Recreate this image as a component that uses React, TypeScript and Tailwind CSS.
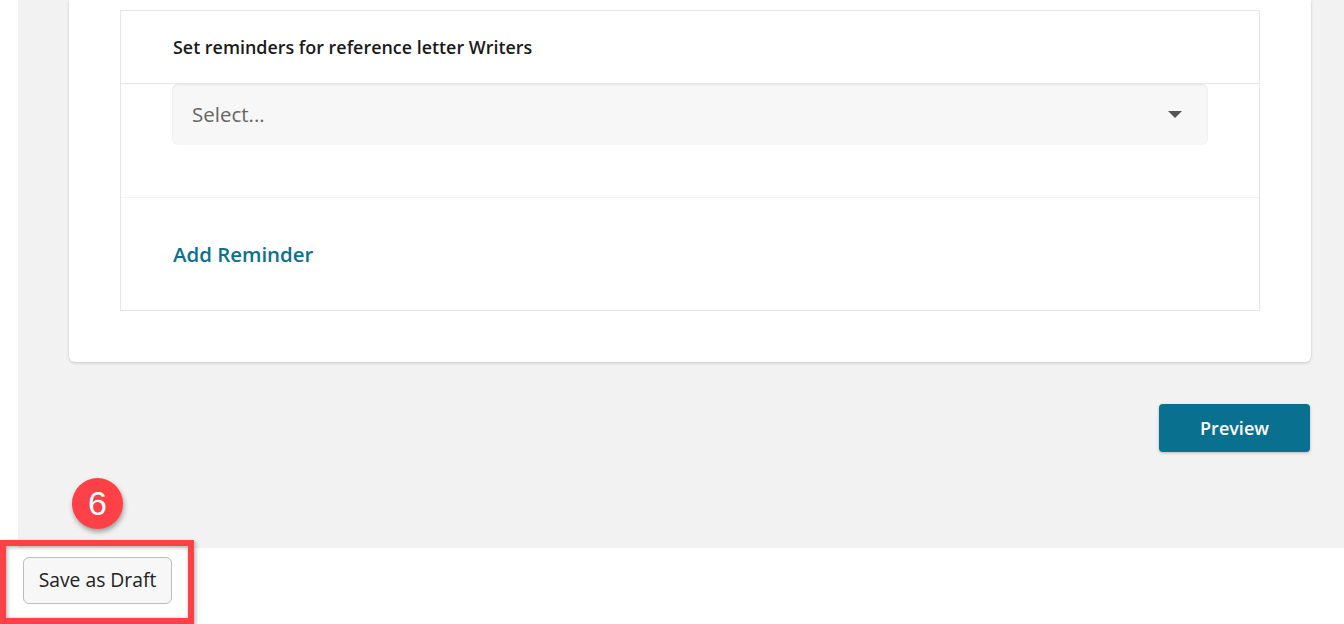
import React from 'react';

const font = { fontFamily: '"Open Sans", "Noto Sans", sans-serif' };

export default function App() {
  return (
    <div className="relative h-[624px] w-[1344px] overflow-hidden bg-white" style={font}>
      {/* Main content area */}
      <div className="flex h-[548px]">
        <div className="w-[18px] bg-white" />
        <div className="flex-1 bg-[#f2f2f2] pl-[51px] pr-[33px]">
          {/* Card */}
          <div className="rounded-b-md bg-white px-[51px] pt-[10px] pb-[51px] shadow-[0_1px_3px_rgba(0,0,0,0.18)]">
            <div className="border border-[#e6e6e6]">
              <div className="flex h-[73px] items-center border-b border-[#e6e6e6] px-[52px]">
                <span className="text-[17.9px] font-semibold text-[#1a1a1a]">
                  Set reminders for reference letter Writers
                </span>
              </div>
              <div className="px-[51px] pb-[52px]">
                <div className="flex h-[61px] items-center justify-between rounded-md bg-[#f7f7f7] pl-[20px] pr-[26px] shadow-[inset_0_1px_2px_rgba(0,0,0,0.08)]">
                  <span className="text-[20.5px] text-[#666666]">Select...</span>
                  <svg width="14" height="8" viewBox="0 0 14 8">
                    <path d="M0 0 L14 0 L7 7 Z" fill="#555555" />
                  </svg>
                </div>
              </div>
              <div className="flex h-[113px] items-center border-t border-[#f3f3f3] px-[52px]">
                <span className="text-[20.4px] font-semibold text-[#0b7190]">Add Reminder</span>
              </div>
            </div>
          </div>
          <div className="mt-[42px] flex justify-end pr-px">
            <button className="h-[48px] w-[151px] rounded bg-[#0a7090] text-[18px] font-semibold text-white shadow-[0_1px_3px_rgba(0,0,0,0.25)]">
              Preview
            </button>
          </div>
        </div>
      </div>

      {/* Footer */}
      <div className="h-[76px] bg-white pl-[23px] pt-[9px]">
        <button className="h-[47px] w-[149px] rounded-md border border-[#bdbdbd] bg-[#f7f7f7] text-[19.3px] text-[#222222]">
          Save as Draft
        </button>
      </div>

      {/* Annotation overlay */}
      <div className="pointer-events-none absolute left-0 top-[540px] h-[84px] w-[194px] border-[6px] border-[#fd4147] shadow-[inset_1px_1px_4px_rgba(0,0,0,0.35),2px_2px_4px_rgba(0,0,0,0.25)]" />
      <div
        className="pointer-events-none absolute left-[72px] top-[478px] flex h-[51px] w-[51px] items-center justify-center rounded-full bg-[#fd4147] text-[34px] text-white shadow-[1px_3px_5px_rgba(0,0,0,0.35)]"
        style={{ fontFamily: '"Liberation Sans", Arial, sans-serif' }}
      >
        6
      </div>
    </div>
  );
}
